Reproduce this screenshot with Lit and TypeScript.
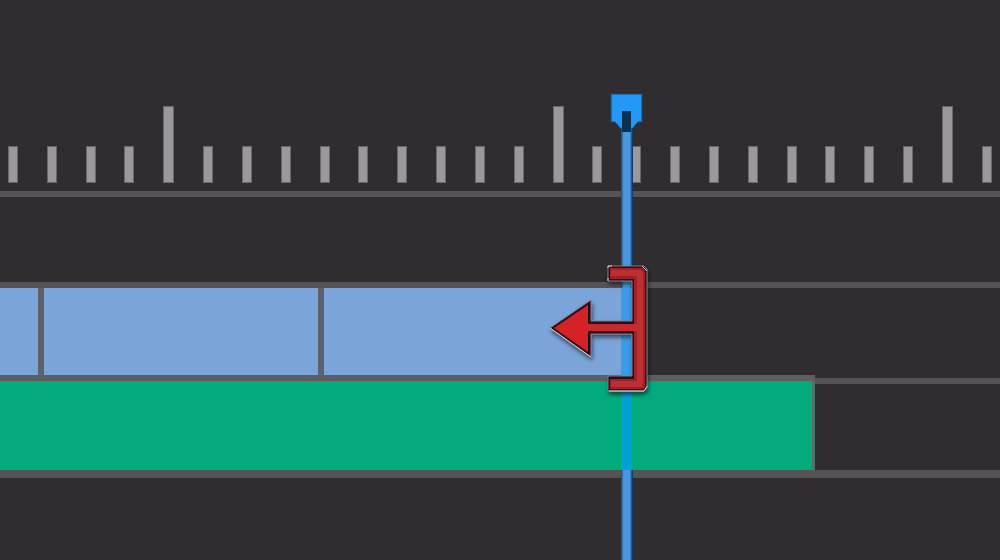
import { LitElement, html, css } from "lit";
import { customElement, property } from "lit/decorators.js";
import { classMap } from "lit/directives/class-map.js";

@customElement("time-ruler")
class TimeRuler extends LitElement {
  @property({ type: Number }) count = 26;
  @property({ type: Number }) firstMajor = 4;

  static styles = css`
    :host {
      display: flex;
      align-items: flex-end;
      justify-content: space-between;
      height: 191px;
      box-sizing: border-box;
      padding: 0 8px 8px;
    }
    .tick {
      box-sizing: border-box;
      width: 10px;
      height: 37px;
      background: #9a989b;
      border: 1px solid #69676a;
    }
    .major {
      width: 11px;
      height: 77px;
    }
  `;

  render() {
    return Array.from({ length: this.count }, (_, i) => html`<div
      class=${classMap({ tick: true, major: i % 10 === this.firstMajor })}
    ></div>`);
  }
}

@customElement("app-root")
class AppRoot extends LitElement {
  @property({ type: Number }) position = 62.7;

  private videoClips = [3.8, 28, 30.9];
  private audioClip = 81.5;

  static styles = css`
    :host {
      display: block;
      position: relative;
      min-height: 100vh;
      overflow: hidden;
      background: #2f2d30;
      font-family: "Liberation Sans", sans-serif;
    }
    .lane {
      height: 85px;
      border-top: 6px solid #555356;
    }
    .video {
      display: flex;
      height: 90px;
      border-top: 6px solid #555356;
    }
    .clip {
      box-sizing: border-box;
      height: 87px;
      background: #7ba4d9;
    }
    .clip + .clip {
      border-left: 6px solid #5c626d;
    }
    .audio {
      height: 86px;
      border-top: 6px solid #555356;
      border-bottom: 8px solid #555356;
    }
    .sound {
      box-sizing: border-box;
      position: relative;
      top: -3px;
      height: 89px;
      background: #02aa7c;
      border-right: 3px solid #55706b;
    }
    .sound::before {
      content: "";
      position: absolute;
      left: 0;
      right: -3px;
      top: -6px;
      height: 6px;
      background: #5c5e5f;
    }
    .playhead {
      position: absolute;
      top: 0;
      bottom: 0;
      width: 110px;
      margin-left: -80px;
      overflow: hidden;
    }
    svg {
      display: block;
    }
  `;

  render() {
    return html`
      <time-ruler></time-ruler>
      <div class="lane"></div>
      <div class="video">
        ${this.videoClips.map((w) => html`<div class="clip" style="width:${w}%"></div>`)}
      </div>
      <div class="audio">
        <div class="sound" style="width:${this.audioClip}%"></div>
      </div>
      <div class="playhead" style="left:${this.position}%">
        <svg width="110" height="2000" viewBox="547 0 110 2000" aria-hidden="true">
          <defs>
            <filter id="shadow" x="-20%" y="-20%" width="140%" height="140%">
              <feDropShadow dx="1" dy="3" stdDeviation="2" flood-color="#000" flood-opacity=".55" />
            </filter>
            <linearGradient id="edge" x1="0" x2="1">
              <stop offset="0" stop-color="#174575" />
              <stop offset=".22" stop-color="#4998e0" />
              <stop offset=".72" stop-color="#4998e0" />
              <stop offset="1" stop-color="#0b2e50" />
            </linearGradient>
          </defs>
          <rect x="621" y="128" width="12" height="160" fill="url(#edge)" />
          <rect x="621" y="288" width="12" height="93" fill="#3b9be9" />
          <rect x="621" y="381" width="11" height="89" fill="#02a1d5" />
          <rect x="621" y="470" width="12" height="1530" fill="url(#edge)" />
          <path d="M611 94H642V122H638L632 129H621L615 122H611Z" fill="#2398f7" stroke="#17446f" stroke-width="1" />
          <path d="M622 111H631V132H622Z" fill="#093250" />
          <g filter="url(#shadow)">
            <path d="M608 266H644L647 269V388L644 391H608V376H632V334H591V357L550 328L591 300V321H632V281H608Z"
              fill="#2b0c19" stroke="#887a83" stroke-width="1" stroke-linejoin="round" />
            <path d="M550 328L591 357M608 268V266H612M608 278V281M642 266L647 271M647 386L644 391H609"
              fill="none" stroke="#d8ced2" stroke-width="1" />
            <path d="M610 268H643L645 271V387L643 389H610V379H634V279H610Z" fill="#9f2028" />
            <path d="M611 270H641L643 273V384L641 387H611V381H637V276H611Z" fill="#be2d34" />
            <path d="M554 328L588 305V352Z" fill="#d42127" />
            <path d="M588 324H637V331H588Z" fill="#c52b31" />
          </g>
        </svg>
      </div>
    `;
  }
}
